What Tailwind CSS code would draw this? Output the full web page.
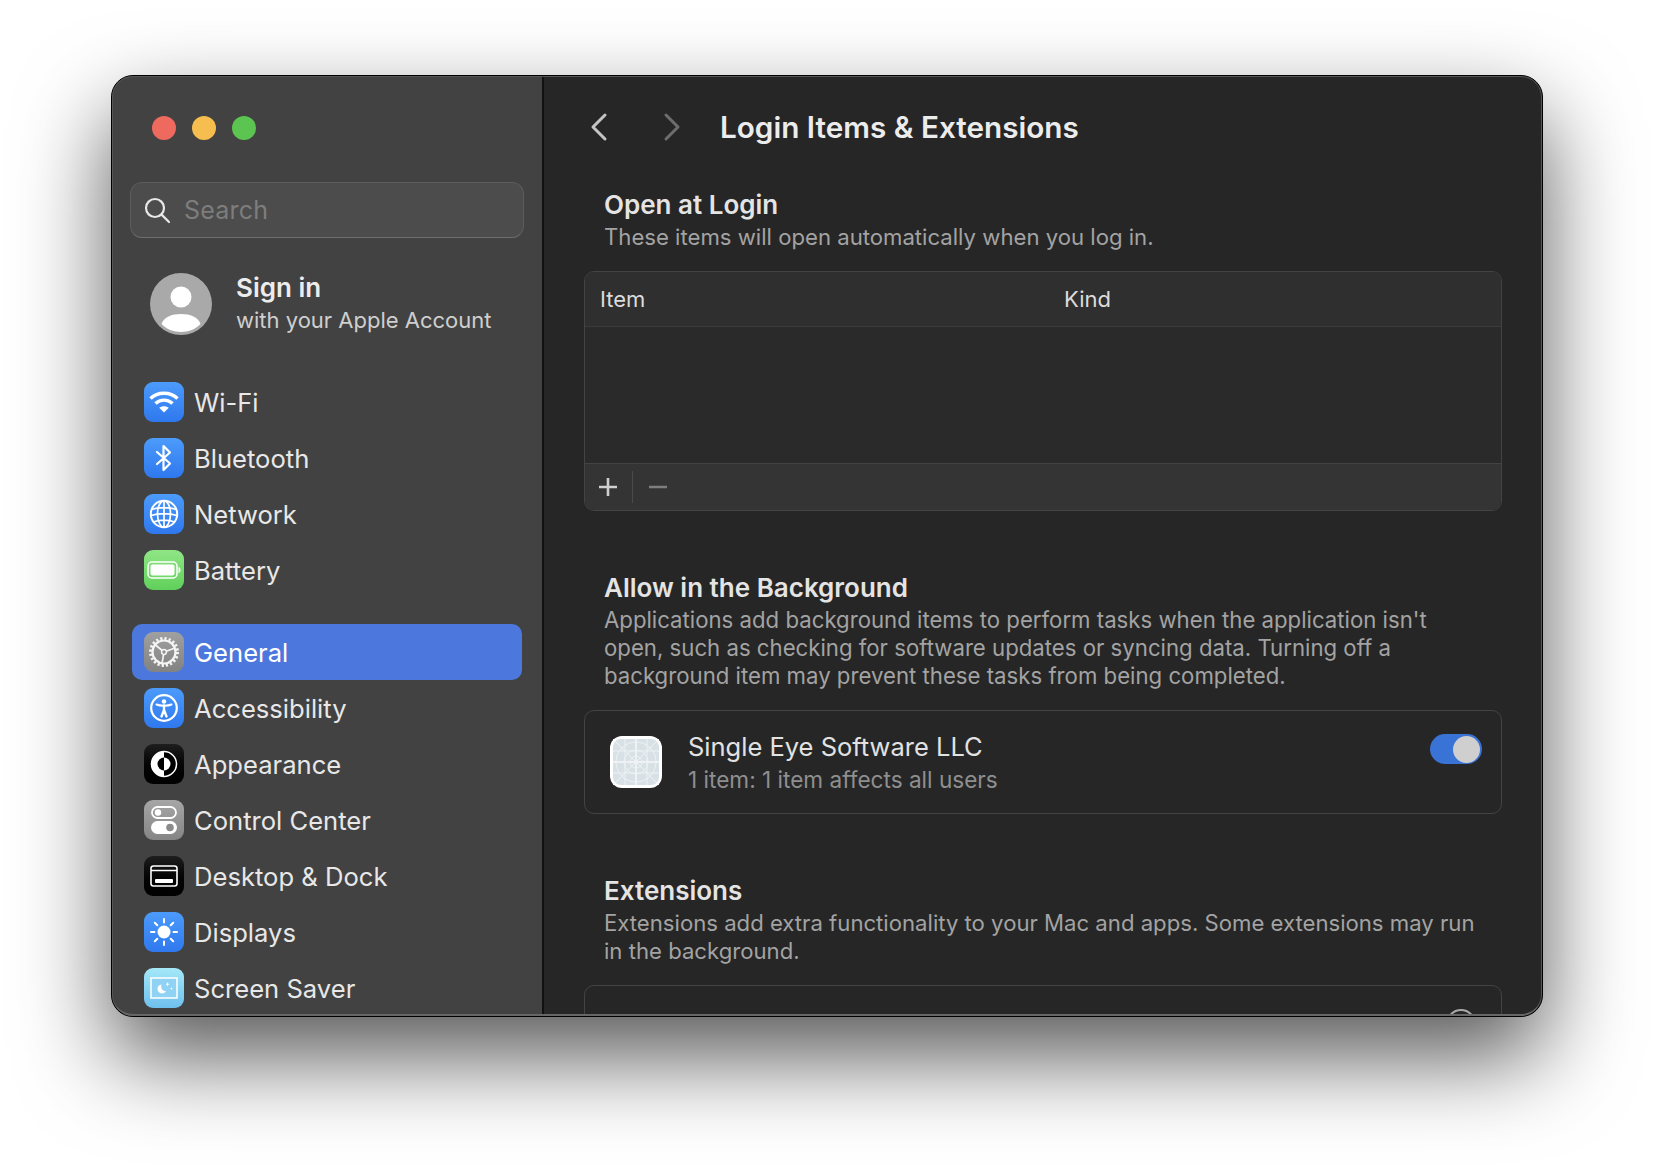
<!DOCTYPE html>
<html lang="en">
<head>
    <meta charset="UTF-8">
    <title>Login Items &amp; Extensions</title>
    <script src="https://cdn.jsdelivr.net/npm/@tailwindcss/browser@4"></script>
</head>
<body class="bg-white h-[1164px] overflow-hidden pt-[75px] pl-[111px] font-['Inter','Noto_Sans',sans-serif] antialiased">
    <!-- Window -->
    <div class="relative w-[1432px] h-[942px] flex rounded-[22px] overflow-hidden border border-black bg-[#262626] shadow-[0_40px_90px_0_rgba(0,0,0,0.66)]">

        <!-- Sidebar -->
        <aside class="w-[432px] shrink-0 bg-[#424242] border-r-2 border-[#111] flex flex-col overflow-hidden">
            <div class="shrink-0 flex gap-4 pl-[40px] pt-[40px]">
                <span class="w-6 h-6 rounded-full bg-[#ef6a5e]"></span>
                <span class="w-6 h-6 rounded-full bg-[#f5be4f]"></span>
                <span class="w-6 h-6 rounded-full bg-[#5cc451]"></span>
            </div>

            <!-- Search -->
            <div class="shrink-0 ml-[18px] mt-[42px] w-[394px] h-[56px] rounded-[12px] bg-[#4c4c4c] border border-[#5c5c5c] border-b-[#6e6e6e] flex items-center pl-[12px] gap-[13px]">
                <svg width="28" height="28" viewBox="0 0 28 28" fill="none" stroke="#e8e8e8" stroke-width="2.2" stroke-linecap="round"><circle cx="12" cy="12" r="9"/><path d="M18.6 18.6 26 26"/></svg>
                <span class="pt-[2px] text-[25px] text-[#7d7d7d] tracking-[0.2px]">Search</span>
            </div>

            <!-- Account -->
            <div class="shrink-0 flex items-center ml-[38px] mt-[34px] gap-[24px]">
                <svg width="62" height="62" viewBox="0 0 62 62" class="shrink-0"><circle cx="31" cy="31" r="31" fill="#a9a9a9"/><circle cx="31" cy="24" r="10.5" fill="#fff"/><path d="M11.5 51c2.500-7 10-10 19.500-10s17 3 19.500 10c-4.500 5-12 8-19.500 8s-15-3-19.500-8z" fill="#fff"/></svg>
                <div>
                    <div class="text-[26px] leading-[32px] font-semibold text-[#ececec]">Sign in</div>
                    <div class="mt-[1px] text-[22px] leading-[30px] text-[#cfcfcf]">with your Apple Account</div>
                </div>
            </div>

            <!-- Network group -->
            <nav class="shrink-0 ml-[20px] w-[390px] mt-[39px] text-[25.6px] text-[#e8e8e8]">
                <div class="h-[56px] flex items-center pl-[12px] gap-[10px]">
                    <span class="w-10 h-10 rounded-[9px] bg-linear-to-b from-[#4c9bfb] to-[#2f78ee] flex items-center justify-center">
                        <svg width="32" height="32" viewBox="0 0 32 32" fill="none" stroke="#fff" stroke-width="3.4"><path d="M2.500 12.500C9.500 5.500 22.500 5.500 29.500 12.500"/><path d="M7.500 17.500C12 13 20 13 24.500 17.500"/><path d="M16 26.500 11.200 21.800C13.800 19.600 18.200 19.600 20.800 21.800Z" fill="#fff" stroke="none"/></svg>
                    </span>
                    <span class="pt-[2px]">Wi-Fi</span>
                </div>
                <div class="h-[56px] flex items-center pl-[12px] gap-[10px]">
                    <span class="w-10 h-10 rounded-[9px] bg-linear-to-b from-[#4c9bfb] to-[#2f78ee] flex items-center justify-center">
                        <svg width="32" height="32" viewBox="0 0 32 32" fill="none" stroke="#fff" stroke-width="2.200" stroke-linejoin="round" stroke-linecap="round"><path d="M9 10 22 21.500 15.500 28V4L22 10.500 9 22"/></svg>
                    </span>
                    <span class="pt-[2px]">Bluetooth</span>
                </div>
                <div class="h-[56px] flex items-center pl-[12px] gap-[10px]">
                    <span class="w-10 h-10 rounded-[9px] bg-linear-to-b from-[#4c9bfb] to-[#2f78ee] flex items-center justify-center">
                        <svg width="32" height="32" viewBox="0 0 32 32" fill="none" stroke="#fff" stroke-width="1.700"><circle cx="16" cy="16" r="13.200" stroke-width="2"/><ellipse cx="16" cy="16" rx="6.500" ry="13.200"/><path d="M16 3V29M3.500 11.500C10 9 22 9 28.500 11.500M3 17.500C10 15 22 15 29 17.500M5.500 24C11 21.500 21 21.500 26.500 24"/></svg>
                    </span>
                    <span class="pt-[2px]">Network</span>
                </div>
                <div class="h-[56px] flex items-center pl-[12px] gap-[10px]">
                    <span class="w-10 h-10 rounded-[9px] bg-linear-to-b from-[#8fe685] to-[#5fd05a] flex items-center justify-center">
                        <svg width="34" height="20" viewBox="0 0 34 20" fill="none"><rect x="1" y="2" width="29" height="16" rx="4" stroke="#fff" stroke-width="1.500"/><rect x="3.500" y="4.500" width="24" height="11" rx="2" fill="#fff"/><path d="M32 7.500c1.300.5 1.300 4.500 0 5z" fill="#fff" stroke="#fff"/></svg>
                    </span>
                    <span class="pt-[2px]">Battery</span>
                </div>
            </nav>

            <!-- System group -->
            <nav class="shrink-0 ml-[20px] w-[390px] mt-[26px] text-[25.6px] text-[#e8e8e8]">
                <div class="h-[56px] flex items-center pl-[12px] gap-[10px] rounded-[10px] bg-[#4c78de] text-white">
                    <span class="w-10 h-10 rounded-[9px] bg-linear-to-b from-[#a0a0a0] to-[#828282] flex items-center justify-center">
                        <svg width="32" height="32" viewBox="0 0 32 32" fill="none" stroke="#f4f4f4"><circle cx="16" cy="16" r="11.500" stroke-width="2.200"/><circle cx="16" cy="16" r="13.500" stroke-width="3" stroke-dasharray="2.200 2.042"/><circle cx="16" cy="16" r="2.400" stroke-width="1.500"/><path d="M15.600 18.400 14.100 26.800M14.200 14.500 7.500 9M18.300 15.200 26.300 12.200" stroke-width="1.700"/></svg>
                    </span>
                    <span class="pt-[2px]">General</span>
                </div>
                <div class="h-[56px] flex items-center pl-[12px] gap-[10px]">
                    <span class="w-10 h-10 rounded-[9px] bg-linear-to-b from-[#4c9bfb] to-[#2f78ee] flex items-center justify-center">
                        <svg width="30" height="30" viewBox="0 0 30 30" fill="none" stroke="#fff"><circle cx="15" cy="15" r="12.800" stroke-width="2.200"/><circle cx="15" cy="8.500" r="2.200" fill="#fff" stroke="none"/><path d="M7.500 11.500C11 13 19 13 22.500 11.500" stroke-width="2" stroke-linecap="round"/><path d="M15 12.500V17M15 17 12.500 23.500M15 17 17.500 23.500" stroke-width="2.400" stroke-linecap="round"/></svg>
                    </span>
                    <span class="pt-[2px]">Accessibility</span>
                </div>
                <div class="h-[56px] flex items-center pl-[12px] gap-[10px]">
                    <span class="w-10 h-10 rounded-[9px] bg-linear-to-b from-[#1e1e1e] to-black flex items-center justify-center">
                        <svg width="28" height="28" viewBox="0 0 28 28"><circle cx="14" cy="14" r="12.500" fill="#000" stroke="#fff" stroke-width="1.500"/><path d="M14 1.500a12.500 12.500 0 0 0 0 25z" fill="#fff"/><path d="M14 7.500a6.500 6.500 0 0 0 0 13z" fill="#000"/><path d="M14 7.500a6.500 6.500 0 0 1 0 13z" fill="#fff"/></svg>
                    </span>
                    <span class="pt-[2px]">Appearance</span>
                </div>
                <div class="h-[56px] flex items-center pl-[12px] gap-[10px]">
                    <span class="w-10 h-10 rounded-[9px] bg-linear-to-b from-[#a6a6a6] to-[#858585] flex items-center justify-center">
                        <svg width="26" height="30" viewBox="0 0 26 30" fill="none"><rect x="1" y="2" width="24" height="11" rx="5.500" stroke="#fff" stroke-width="1.800"/><circle cx="7" cy="7.500" r="3.200" fill="#fff"/><rect x="0" y="16" width="26" height="13" rx="6.500" fill="#fff"/><circle cx="19" cy="22.500" r="3.800" fill="#8b8b8b"/></svg>
                    </span>
                    <span class="pt-[2px]">Control Center</span>
                </div>
                <div class="h-[56px] flex items-center pl-[12px] gap-[10px]">
                    <span class="w-10 h-10 rounded-[9px] bg-linear-to-b from-[#1e1e1e] to-black flex items-center justify-center">
                        <svg width="28" height="22" viewBox="0 0 28 22" fill="none"><rect x="1" y="1" width="26" height="20" rx="2.500" stroke="#fff" stroke-width="1.600"/><path d="M1 5.500H27" stroke="#fff" stroke-width="1.600"/><rect x="5" y="14" width="18" height="4" rx="1" fill="#fff"/></svg>
                    </span>
                    <span class="pt-[2px]">Desktop &amp; Dock</span>
                </div>
                <div class="h-[56px] flex items-center pl-[12px] gap-[10px]">
                    <span class="w-10 h-10 rounded-[9px] bg-linear-to-b from-[#4c9bfb] to-[#2f78ee] flex items-center justify-center">
                        <svg width="30" height="30" viewBox="0 0 30 30" fill="none" stroke="#fff" stroke-width="2" stroke-linecap="round"><circle cx="15" cy="15" r="6.500" fill="#fff" stroke="none"/><path d="M15 2V5.500M15 24.500V28M2 15H5.500M24.500 15H28M5.800 5.800 8.300 8.300M21.700 21.700 24.200 24.200M5.800 24.200 8.300 21.700M21.700 8.300 24.200 5.800"/></svg>
                    </span>
                    <span class="pt-[2px]">Displays</span>
                </div>
                <div class="h-[56px] flex items-center pl-[12px] gap-[10px]">
                    <span class="w-10 h-10 rounded-[9px] bg-linear-to-b from-[#a4e8f8] to-[#6fc0ee] flex items-center justify-center">
                        <svg width="28" height="22" viewBox="0 0 28 22" fill="none"><rect x="1" y="1" width="26" height="20" fill="#8fd2f3" stroke="#fff" stroke-width="1.500"/><path d="M11.500 7.500a4.500 4.500 0 1 0 4.500 6.500c-3 .5-5.500-2.500-4.500-6.500z" fill="#fff"/><path d="M17.500 5l.6 1.600 1.600.6-1.600.6-.6 1.600-.6-1.600-1.600-.6 1.600-.6zM21.500 10l.4 1.200 1.200.4-1.200.4-.4 1.200-.4-1.200-1.200-.4 1.200-.4z" fill="#fff"/></svg>
                    </span>
                    <span class="pt-[2px]">Screen Saver</span>
                </div>
            </nav>
        </aside>

        <!-- Content -->
        <main class="flex-1 min-w-0 overflow-hidden">
            <header class="h-[102px] flex items-center">
                <svg width="20" height="30" viewBox="0 0 20 30" fill="none" stroke="#c4c4c4" stroke-width="3" stroke-linecap="round" stroke-linejoin="round" class="ml-[45px]"><path d="M16 3 4 15l12 12"/></svg>
                <svg width="20" height="30" viewBox="0 0 20 30" fill="none" stroke="#6d6d6d" stroke-width="3" stroke-linecap="round" stroke-linejoin="round" class="ml-[53px]"><path d="M4 3l12 12L4 27"/></svg>
                <h1 class="ml-[38px] text-[29.7px] font-semibold text-[#ececec]">Login Items &amp; Extensions</h1>
            </header>

            <div class="pl-[40px] pr-[40px] pt-[11px]">
                <h2 class="pl-[20px] text-[26px] leading-[32px] font-semibold text-[#e4e4e4]">Open at Login</h2>
                <p class="pl-[20px] mt-[2px] text-[22.15px] leading-[28px] text-[#a3a3a3]">These items will open automatically when you log in.</p>

                <div class="mt-[20px] h-[240px] rounded-[10px] border border-[#434343] overflow-hidden flex flex-col">
                    <div class="h-[55px] shrink-0 bg-[#2f2f2f] border-b border-[#3b3b3b] flex items-center text-[22px] text-[#dcdcdc]">
                        <span class="pl-[15px] w-[479px]">Item</span>
                        <span>Kind</span>
                    </div>
                    <div class="flex-1 bg-[#2a2a2a]"></div>
                    <div class="h-[47px] shrink-0 bg-[#343434] border-t border-[#434343] flex items-center">
                        <svg width="18" height="18" viewBox="0 0 18 18" stroke="#cfcfcf" stroke-width="2.600" class="ml-[14px]"><path d="M9 0V18M0 9H18"/></svg>
                        <span class="w-px h-[32px] bg-[#4a4a4a] ml-[15px]"></span>
                        <svg width="18" height="18" viewBox="0 0 18 18" stroke="#7e7e7e" stroke-width="2.600" class="ml-[16px]"><path d="M0 9H18"/></svg>
                    </div>
                </div>

                <h2 class="pl-[20px] mt-[61px] text-[26px] leading-[32px] font-semibold text-[#e4e4e4]">Allow in the Background</h2>
                <p class="pl-[20px] pr-[20px] mt-[2px] text-[22.2px] leading-[28px] text-[#a3a3a3]">Applications add background items to perform tasks when the application isn't open, such as checking for software updates or syncing data. Turning off a background item may prevent these tasks from being completed.</p>

                <div class="mt-[20px] h-[104px] rounded-[10px] border border-[#434343] flex items-start">
                    <span class="ml-[25px] mt-[25px] w-[52px] h-[52px] rounded-[12px] bg-white flex items-center justify-center shrink-0">
                        <svg width="46" height="46" viewBox="0 0 46 46" fill="none" stroke="#eef2f4" stroke-width="1"><rect width="46" height="46" rx="8" fill="#d7e1e6" stroke="none"/><path d="M23 0V46M0 23H46" stroke-width="2"/><path d="M12 0V46M34 0V46M0 12H46M0 34H46M0 0 46 46M46 0 0 46"/><circle cx="23" cy="23" r="20"/><circle cx="23" cy="23" r="12"/><circle cx="23" cy="23" r="6"/></svg>
                    </span>
                    <div class="ml-[26px] mt-[18px]">
                        <div class="text-[25.5px] leading-[36px] text-[#e2e2e2]">Single Eye Software LLC</div>
                        <div class="text-[22.6px] leading-[30px] text-[#8f8f8f]">1 item: 1 item affects all users</div>
                    </div>
                    <div class="ml-auto mr-[19px] mt-[23px] w-[52px] h-[30px] rounded-full bg-[#3a73d6] flex items-center justify-end pr-[2px]">
                        <span class="w-[27px] h-[27px] rounded-full bg-[#cfcfcf]"></span>
                    </div>
                </div>

                <h2 class="pl-[20px] mt-[61px] text-[26px] leading-[32px] font-semibold text-[#e4e4e4]">Extensions</h2>
                <p class="pl-[20px] pr-[20px] mt-[2px] text-[22.15px] leading-[28px] text-[#a3a3a3]">Extensions add extra functionality to your Mac and apps. Some extensions may run in the background.</p>

                <div class="mt-[20px] h-[103px] rounded-[10px] border border-[#434343] flex items-start">
                    <span class="ml-[33px] mt-[28px] w-[36px] h-[30px] rounded-[4px] bg-[#d9d9d9] shrink-0"></span>
                    <span class="ml-[76px] mt-[28px] w-[3px] h-[3px] rounded-full bg-[#d9d9d9] shrink-0"></span>
                    <span class="ml-auto mr-[25px] mt-[23px] w-[30px] h-[30px] rounded-full border-2 border-[#a8a8a8]"></span>
                </div>
            </div>
        </main>

        <!-- Inner window edge -->
        <div class="absolute inset-0 rounded-[21px] border border-[#565656] border-b-2 border-b-[#666] pointer-events-none"></div>
    </div>
</body>
</html>
